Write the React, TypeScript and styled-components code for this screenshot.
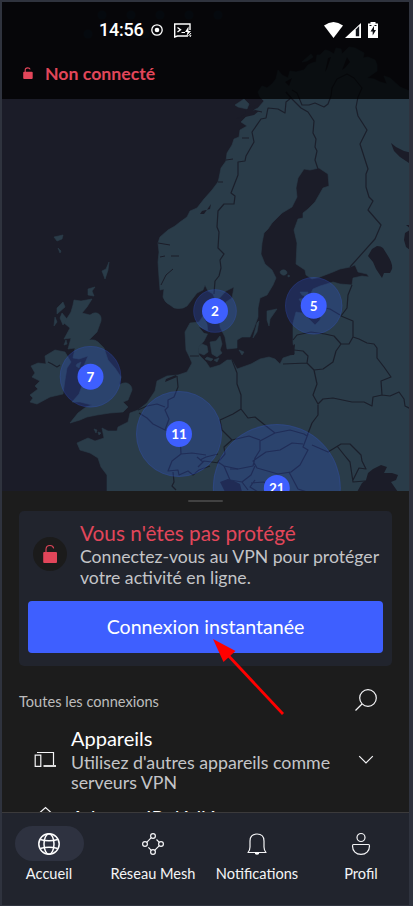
import React from "react";
import styled, { createGlobalStyle } from "styled-components";

const Global = createGlobalStyle`
  * { box-sizing: border-box; }
  html, body { margin: 0; padding: 0; background: #2e323d; overflow: hidden; }
  svg { display: block; }
`;

const Frame = styled.div`
  position: relative;
  width: 413px;
  height: 906px;
  padding: 2px 4px 1px 2px;
  background: #2f333e;
  font-family: Lato, "Liberation Sans", sans-serif;
  overflow: hidden;
`;

const Screen = styled.div`
  display: flex;
  flex-direction: column;
  width: 407px;
  height: 903px;
  overflow: hidden;
  background: #1c1c1c;
`;

const MapArea = styled.div`
  position: relative;
  flex: none;
  height: 489px;
  background: #1b1c28;
`;

const MapSvg = styled.svg`
  display: block;
  width: 407px;
  height: 489px;
`;

const Header = styled.header`
  position: absolute;
  inset: 0 0 auto 0;
  height: 97px;
  background: rgba(0, 0, 0, 0.76);
`;

const StatusBar = styled.div`
  display: flex;
  align-items: center;
  height: 55px;
  padding: 0 31px 0 97px;
`;

const Clock = styled.span`
  width: 45px;
  font: 500 18px/20px Roboto, sans-serif;
  letter-spacing: -0.25px;
  color: #fff;
`;

const StatusIcons = styled.svg<{ $push?: boolean }>`
  flex: none;
  margin-left: ${(p) => (p.$push ? "auto" : "5px")};
`;

const Connection = styled.div`
  display: flex;
  align-items: center;
  height: 34px;
  padding-left: 20px;
  gap: 11px;
  color: #e2465a;
  font-weight: 700;
  font-size: 17.7px;
  line-height: 22px;
`;

const Sheet = styled.section`
  flex: none;
  height: 321px;
  padding: 9px 17px 0;
  overflow: hidden;
  background: #1c1c1c;
`;

const Handle = styled.div`
  width: 35px;
  height: 2px;
  margin: 0 auto 9px;
  border-radius: 1px;
  background: #424242;
`;

const Card = styled.div`
  height: 155px;
  padding: 10px 9px 0;
  border-radius: 5px;
  background: #21242d;
`;

const CardTop = styled.div`
  display: flex;
  height: 80px;
  padding-left: 5px;
`;

const LockBadge = styled.div`
  display: grid;
  place-items: center;
  flex: none;
  width: 34px;
  height: 34px;
  margin: 16px 13px 0 0;
  border-radius: 50%;
  background: #1b1b1b;
`;

const Title = styled.div<{ $danger?: boolean }>`
  height: ${(p) => (p.$danger ? 26 : 26.5)}px;
  font-size: ${(p) => (p.$danger ? 20.8 : 20)}px;
  line-height: ${(p) => (p.$danger ? 24 : 26)}px;
  white-space: nowrap;
  color: ${(p) => (p.$danger ? "#e2465a" : "#fff")};
`;

const Body = styled.div<{ $spaced?: boolean }>`
  font-size: ${(p) => (p.$spaced ? 17.8 : 17.64)}px;
  line-height: 20.5px;
  white-space: nowrap;
  color: #c4c5c8;
`;

const Connect = styled.button`
  display: block;
  width: 355px;
  height: 52px;
  padding: 0;
  border: 0;
  border-radius: 4px;
  background: #3e5fff;
  color: #fff;
  font: 400 19.6px/52px Lato, sans-serif;
`;

const ListHead = styled.div`
  display: flex;
  align-items: center;
  justify-content: space-between;
  height: 59px;
  padding: 9px 14px 0 0;
  font-size: 14.6px;
  color: #bcbcbc;
`;

const ListLabel = styled.span`
  padding-top: 2px;
`;

const Row = styled.div`
  display: flex;
  height: 78.6px;
`;

const RowIcon = styled.div<{ $top: number }>`
  flex: none;
  width: 52px;
  padding: ${(p) => p.$top}px 0 0 15px;
`;

const RowText = styled.div`
  flex: 1;
`;

const RowChevron = styled.div`
  flex: none;
  padding: 30px 18px 0 0;
`;

const Nav = styled.nav`
  display: grid;
  grid-template-columns: repeat(4, 104px);
  flex: none;
  height: 93px;
  padding-top: 13px;
  margin-left: -5px;
  border-top: 1px solid #3b3a3b;
  background: #21242d;
`;

const NavItem = styled.div`
  display: flex;
  flex-direction: column;
  align-items: center;
  color: #f4f4f6;
  font-size: 14.6px;
  line-height: 22px;
  white-space: nowrap;
`;

const NavPill = styled.div<{ $active?: boolean }>`
  display: grid;
  place-items: center;
  width: 69px;
  height: 35px;
  margin-bottom: 2px;
  border-radius: 18px;
  background: ${(p) => (p.$active ? "#2e3240" : "transparent")};
`;

const Pointer = styled.svg`
  position: absolute;
  left: 205px;
  top: 630px;
  pointer-events: none;
`;

const land = [
  // Scandinavia, Finland and the continent
  "M412 92L400 87L390 78L384 76L387 84L380 82L374 79L367 78L377 71L377 65L375 60L368 57L363 58L364 53L355 48L349 47L342 54L341 49L336 48L334 54L329 51L325 50L320 55L317 55L316 62L312 63L308 65L304 70L296 72L290 71L288 78L282 75L278 70L276 79L272 84L267 88L262 86L258 92L260 97L264 101L258 108L250 112L246 117L241 122L247 126L240 130L239 137L234 139L232 145L227 153L226 161L221 168L219 178L218 182L212 190L204 199L197 208L190 211L187 217L180 222L175 226L168 230L160 237L158 243L159 252L158 262L159 277L160 290L164 289L163 297Q165 303 170 305Q174 309 178 308.5Q183 309 187 306L197 293L203 290L205 285L208 291L213 294L216 302L226 291L234 287L232 298L226 302L219 314L220 327L225 337L227 349L237 348L237 340L242 337L250 337L254 328L258 317L258 308L260 298L267 295L273 285L276 278L272 270L265 264L261 254L262 243L264 233L268 229L272 223L282 213L292 207L297 197L296 188L298 178L304 169L310 170L319 168L328 174L329 186L323 188L315 202L308 209L303 213L303 218L298 219L294 230L297 243L296 264L305 270L306 275L312 279L320 277L333 272L340 269L350 267L355 265L358 272L367 274L369 277L362 276L353 278L352 285L340 284L333 282L320 286L313 289L311 293L316 300L322 308L320 320L315 325L310 320L302 313L296 312L293 323L293 343L295 354L283 358L280 364L275 359L269 357L260 359L251 364L237 369L232 360L227 360L220 365L210 368L206 362L199 355L198 348L204 341L208 333L207 324L203 316L199 322L190 323L185 332L186 350L189 356L192 363L187 372L178 375L167 376L157 381L155 391L147 403L138 410L130 413L128 422L118 427L117 431L108 431L102 428L104 438L95 441L88 438L77 443L80 450L90 453L98 458L101 467L107 475L107 494H412Z",
  // Great Britain
  "M74 300L81 301L92 299L87 307L82 313L90 315Q94 312 97 313Q102 315 101 321L97 332L89 340Q95 339 98 342L104 348L108 360L115 368L121 377L119 385Q124 382 127 383Q132 385 132 390L128 400L123 402L128 407L123 412L110 413L97 415L87 417L80 420L70 423L78 413L86 407L92 405L80 402L72 402L79 394L83 383L82 370L88 356L79 359L73 358L75 348L68 349L71 338L64 339L70 328L64 323L71 312L73 305Z",
  // Ireland
  "M45 356L50 353L55 350L65 352L71 362L67 368L65 380L63 394L50 397L37 404L30 402L33 398L30 395L38 389L35 386L40 381L32 377L35 373L31 366L38 363L46 364Z",
  // Small islands
  "M63 302L65 307L57 314L57 308ZM55 317L57 322L54 326ZM62 313L67 319L63 325L60 318ZM66 340L67 344L64 345ZM54 237L63 235L62 239L57 241ZM58 248L61 251L60 253ZM109 262L108 270L105 279L102 271L106 269ZM88 289L95 287L92 291L94 296L88 295ZM94 429L97 430L96 433ZM98 432L101 433L99 435Z",
  "M267 311L277 309L270 319L269 326L267 320ZM259 321L257 332L253 338L257 323ZM239 350L244 352L242 355ZM280 272C281 269 287 269 287 273C286 276 281 276 280 272ZM288 275L290 276L288 277ZM300 292L308 292L307 297L302 295ZM299 299L308 298L303 306Z",
  "M198 347L202 344L207 346L208 352L204 355L199 353ZM210 342L216 341L220 336L222 344L220 350L222 353L217 357L212 354ZM207 357L213 359L211 361L205 359ZM214 360L219 358L217 362ZM77 364L81 362L79 368L76 366ZM235 105L244 99L249 104L247 109L238 107ZM302 62L311 54L313 57L307 61Z",
];

const water = [
  "M391 143L396 147L404 151L412 153V165L400 157L394 151Z",
  "M377 246Q381 246 383 248L388 256Q393 264 392 269L390 273L384 273L382 278L376 269L373 262L368 256L372 249Z",
  "M405 233L410 230V250L406 247L404 240ZM406 225H412V230Z",
  "M357 492L362 483L366 480L368 473L373 469L381 465L387 467L384 473L392 473L398 475L396 480L391 482L398 492Z",
  "M220 482L228 479L234 481L240 484L242 492H225Z",
  "M290 348L295 344L294 355L291 355ZM200 214L204 214L211 204L210 209L202 211ZM246 110L256 105L253 111L259 111L254 115L236 119L245 114Z",
  "M166 379L176 375L177 377L165 382ZM199 327L208 331L209 334L204 333ZM325 72L328 58L331 57L327 69ZM342 70L347 57L350 62L345 68ZM285 82L292 78L289 86Z",
];

const borders = [
  "M286 92L291 98L286 102L285 113L278 109L268 108L266 118L261 119L252 132L254 142L246 156L245 161L238 162L238 175L231 193L235 196L234 204L224 204L218 211L217 227L219 232L218 248L224 254L220 260L221 268L219 276L215 281L214 294",
  "M286 92L292 99L301 108L308 112L314 121L313 133L316 139L315 147L317 151L315 160L318 169M292 90L297 93L302 105L309 105L315 103L324 107L328 104L331 96L332 88L337 79L347 74L354 78L362 88L358 97L356 107L358 116L367 130L360 144L368 169L366 174L366 187L369 197L373 201L368 210L381 225L375 239L350 267",
  "M352 285L348 295L347 308L341 316L353 321L353 337L349 344L341 344L334 336L325 334L311 332L297 335L293 340M320 307L330 309L340 315M353 337L359 339L367 343L374 344L377 348L377 358L384 367L391 377L381 381L382 395L373 397L372 406L364 402L352 402L333 398L323 399L318 404L313 395L317 384L314 370L323 369L333 362L336 351L341 344M294 350L303 351L308 356L307 363L283 364M307 363L314 370M382 395L390 396L399 392L404 399L405 406L411 409",
  "M232 360L237 373L237 384L241 395L241 409L248 418L255 417L266 426L275 433L290 430L304 434L307 436L312 423L318 415L318 405M241 409L233 414L220 420L222 430L232 440L224 447L225 454L218 462L224 466L238 469L253 466L255 458L260 450L260 441L275 433M232 440L249 436L260 440M308 434L303 447L308 450L300 465L291 472L278 474L257 468L253 461L266 452L280 450L292 443L303 444M312 445L328 452L341 444L350 444L361 455L362 461L366 469L359 468L353 480M337 446L345 456L350 462L353 482L365 481",
  "M218 454L206 457L200 460M219 463L204 461L198 467M224 466L230 480L242 482L251 475L255 466M230 469L238 469M242 482L248 490M255 480L250 487L258 492M251 483L264 482L277 493M289 472L298 489L307 492",
  "M177 376L178 387L174 397L168 400L168 407L165 410L169 419L165 430M138 410L147 406L157 404L165 407M139 413L147 418L153 424L165 430L173 432L180 434L181 454L172 461L168 471L178 470L179 475L188 471L193 475L199 470L210 466M181 454L192 453L206 455M197 457L203 462M173 472L174 482L172 486L176 490M190 356L199 356M48 362L52 364L57 367L60 365",
];

const fjords =
  "M158 243L170 245M160 257L165 256M171 256L179 256M173 269L166 275L161 285M242 138H249M226 160L233 159M218 182H223M253 110L262 112";

const gridDots = [
  [102, 15],
  [131, 15],
  [160, 15],
  [189, 15],
  [218, 15],
  [88, 34],
  [145, 34],
];

const bubbles: [number, number, number, string][] = [
  [90.5, 376.7, 30.8, "7"],
  [215, 311, 21.8, "2"],
  [313.7, 305.8, 28.7, "5"],
  [179, 434, 43, "11"],
  [276.8, 488, 64, "21"],
];

function EuropeMap() {
  return (
    <MapSvg viewBox="2 2 407 489">
      {gridDots.map(([x, y]) => (
        <circle key={`${x}-${y}`} cx={x} cy={y} r="4.5" fill="#17293a" />
      ))}
      {land.map((d) => (
        <path key={d} d={d} fill="#2a3c49" stroke="#2a3c49" strokeWidth="0.6" strokeLinejoin="round" />
      ))}
      {water.map((d) => (
        <path key={d} d={d} fill="#1b1c28" />
      ))}
      {borders.map((d) => (
        <path key={d} d={d} fill="none" stroke="#1b1f2b" strokeWidth="1.2" strokeLinejoin="round" />
      ))}
      <path d={fjords} fill="none" stroke="#1b1c28" />
      {bubbles.map(([x, y, r, n]) => (
        <g key={n}>
          <circle cx={x} cy={y} r={r} fill="#3058dc" fillOpacity="0.25" />
          <circle cx={x} cy={y} r={r - 0.5} fill="none" stroke="#3e5fff" strokeOpacity="0.12" />
          <circle cx={x} cy={y} r="13" fill="#3e5fff" />
          <text x={x} y={y + 5} textAnchor="middle" fill="#fff" fontFamily="Lato" fontSize="13.5" fontWeight="700">
            {n}
          </text>
        </g>
      ))}
    </MapSvg>
  );
}

const stroke = { fill: "none", stroke: "#f4f4f6", strokeWidth: 1.2 };

export default function App() {
  return (
    <>
      <Global />
      <Frame>
        <Screen>
          <MapArea>
            <EuropeMap />
            <Header>
              <StatusBar>
                <Clock>14:56</Clock>
                <StatusIcons width="46" height="16" viewBox="0 0 46 16">
                  <circle cx="8" cy="8" r="5.2" fill="none" stroke="#fff" strokeWidth="1.3" />
                  <circle cx="8" cy="8" r="2.3" fill="#fff" />
                  <path d="M39 14H28.5L25.7 15V2H41V8" fill="none" stroke="#fff" strokeWidth="1.4" />
                  <path d="M28.5 5.5L31.5 7.7L28.5 10" fill="none" stroke="#fff" strokeWidth="1.4" />
                  <path d="M32.5 10.5H36" stroke="#fff" />
                  <path d="M39.5 4.5L36 10H38.5L37.5 14L42 9H39.5Z" fill="#fff" />
                  <path d="M39.5 14L42 11M41 15L42 13" stroke="#fff" />
                </StatusIcons>
                <StatusIcons $push width="55" height="18" viewBox="323 20 55 18">
                  <path d="M324 24.5Q333.5 17.5 343 24.5L333.5 37Z" fill="#fff" />
                  <path d="M361 22V37H345Z" fill="#fff" />
                  <path d="M355.8 28.5L359.2 25V35.3H355.8Z" fill="#10131a" />
                  <path d="M370.5 21H375.5V22.5H378V37H368V22.5H370.5Z" fill="#fff" />
                  <path d="M374 25L370.5 30.5H372.7V34.5L376 29H374Z" fill="#0b0d12" />
                  <path d="M369.5 24.5H371.5M374.5 24.5H376.5" stroke="#0b0d12" />
                </StatusIcons>
              </StatusBar>
              <Connection>
                <svg width="12" height="14" viewBox="0 0 12 14">
                  <rect x="1.2" y="4.8" width="9.5" height="7.2" rx="1" fill="#e2465a" />
                  <path d="M3.2 5V3.2Q3.2 0.9 5.7 0.9Q7.6 0.9 8.2 2.4" fill="none" stroke="#e2465a" strokeWidth="1.1" />
                </svg>
                Non connecté
              </Connection>
            </Header>
          </MapArea>
          <Sheet>
            <Handle />
            <Card>
              <CardTop>
                <LockBadge>
                  <svg width="18" height="20" viewBox="0 0 18 20">
                    <rect x="2.2" y="8" width="13.8" height="11" rx="1" fill="#e2465a" />
                    <path d="M5 8V5.5Q5 1.5 9 1.5Q12 1.5 12.7 4.3" fill="none" stroke="#e2465a" strokeWidth="1.1" />
                  </svg>
                </LockBadge>
                <div>
                  <Title $danger>Vous n'êtes pas protégé</Title>
                  <Body>
                    Connectez-vous au VPN pour protéger
                    <br />
                    votre activité en ligne.
                  </Body>
                </div>
              </CardTop>
              <Connect>Connexion instantanée</Connect>
            </Card>
            <ListHead>
              <ListLabel>Toutes les connexions</ListLabel>
              <svg width="24" height="24" viewBox="0 0 24 24">
                <circle cx="14" cy="10" r="8.3" {...stroke} />
                <path d="M8 16L1.5 22.5" {...stroke} />
              </svg>
            </ListHead>
            <Row>
              <RowIcon $top={26}>
                <svg width="23" height="18" viewBox="0 0 23 18">
                  <path d="M3 1.5H19.5V14M1.2 4.2H6.8V15.3H1.2Z" {...stroke} />
                  <path d="M9.5 15H22" stroke="#fff" strokeWidth="1.7" />
                </svg>
              </RowIcon>
              <RowText>
                <Title>Appareils</Title>
                <Body $spaced>
                  Utilisez d'autres appareils comme
                  <br />
                  serveurs VPN
                </Body>
              </RowText>
              <RowChevron>
                <svg width="16" height="10" viewBox="0 0 16 10">
                  <path d="M1.2 1.2L8 8L14.8 1.2" {...stroke} />
                </svg>
              </RowChevron>
            </Row>
            <Row>
              <RowIcon $top={2}>
                <svg width="23" height="18" viewBox="0 0 23 18">
                  <path d="M6 6.5L11.5 1.5L17 6.5" {...stroke} />
                </svg>
              </RowIcon>
              <RowText>
                <Title>Adresse IP dédiée</Title>
              </RowText>
            </Row>
          </Sheet>
          <Nav>
            <NavItem>
              <NavPill $active>
                <svg width="24" height="24" viewBox="0 0 24 24" fill="none" stroke="#fff" strokeWidth="1.5">
                  <circle cx="12" cy="12" r="10.2" />
                  <ellipse cx="12" cy="12" rx="5" ry="10.2" />
                  <path d="M3.2 7.5Q12 10 20.8 7.5M3.2 16.5Q12 14 20.8 16.5" />
                </svg>
              </NavPill>
              Accueil
            </NavItem>
            <NavItem>
              <NavPill>
                <svg width="24" height="24" viewBox="0 0 24 24" {...stroke}>
                  <circle cx="12" cy="4" r="2.4" />
                  <circle cx="4" cy="12" r="2.4" />
                  <circle cx="20" cy="12" r="2.4" />
                  <circle cx="12" cy="20" r="2.4" />
                  <path d="M10.3 5.7L5.7 10.3M15.5 7.5L18.3 10.3M7.4 15.4L10.3 18.3M13.7 18.3L18.3 13.7" />
                </svg>
              </NavPill>
              Réseau Mesh
            </NavItem>
            <NavItem>
              <NavPill>
                <svg width="24" height="24" viewBox="0 0 24 24" {...stroke}>
                  <path d="M3 20.5Q5 18 5 15V9Q5 2 12 2Q19 2 19 9V15Q19 18 21 20.5Z" strokeLinejoin="round" />
                  <path d="M10 20.5H14V22Q12 23.5 10 22Z" fill="#fff" stroke="none" />
                </svg>
              </NavPill>
              Notifications
            </NavItem>
            <NavItem>
              <NavPill>
                <svg width="24" height="24" viewBox="0 0 24 24" {...stroke}>
                  <circle cx="12" cy="5.5" r="4" />
                  <path d="M4.5 12.5H19.5Q20.5 12.5 20.5 14C20.5 19 17 22.4 12 22.4S3.5 19 3.5 14Q3.5 12.5 4.5 12.5Z" />
                </svg>
              </NavPill>
              Profil
            </NavItem>
          </Nav>
        </Screen>
        <Pointer width="85" height="90" viewBox="205 630 85 90">
          <path d="M283 714L225 652" stroke="#f00" strokeWidth="2.8" />
          <path d="M213 639L235.5 651L223.5 662Z" fill="#f00" />
        </Pointer>
      </Frame>
    </>
  );
}
